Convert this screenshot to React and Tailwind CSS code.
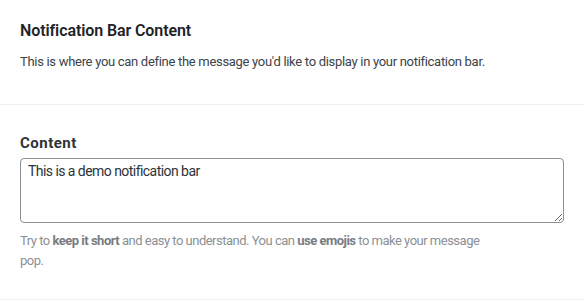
import React from 'react';

export default function App() {
  return (
    <div className="w-[584px] h-[301px] bg-white overflow-hidden text-[#1d2327]" style={{ fontFamily: 'Roboto, "Liberation Sans", Arial, sans-serif' }}>
      {/* Section header */}
      <div className="px-5 pt-[21px] h-[105px] border-b border-[#f0f0f1]">
        <h2 className="text-[16px] leading-[20px] font-semibold tracking-[-0.1px] text-[#1d2327]">Notification Bar Content</h2>
        <p className="mt-[12px] text-[13px] leading-[18px] tracking-[-0.3px] text-[#3c434a]">
          This is where you can define the message you'd like to display in your notification bar.
        </p>
      </div>

      {/* Field */}
      <div className="px-5 pt-[28px] h-[195px] border-b border-[#f0f0f1]">
        <label className="block text-[15px] leading-[20px] font-bold tracking-[0.5px] text-[#2c3338]">Content</label>
        <textarea
          className="mt-[5px] block w-full h-[65px] rounded-[4px] border border-[#8c8f94] px-[7px] py-[2px] text-[14px] leading-[20px] tracking-[-0.55px] text-[#2c3338] outline-none resize-y"
          defaultValue="This is a demo notification bar"
          style={{ fontFamily: 'Roboto, "Liberation Sans", Arial, sans-serif' }}
        />
        <p className="mt-[8px] max-w-[482px] text-[13px] leading-[20px] tracking-[-0.5px] text-[#8c8f94]">
          Try to <strong className="font-bold text-[#787c82]">keep it short</strong> and easy to understand. You can <strong className="font-bold text-[#787c82]">use emojis</strong> to make your message pop.
        </p>
      </div>
    </div>
  );
}
